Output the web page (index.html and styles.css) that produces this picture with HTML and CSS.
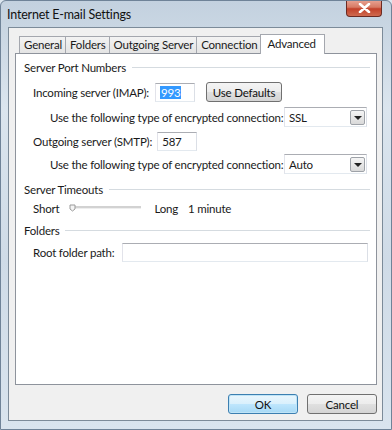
FILE: index.html
```html
<!DOCTYPE html>
<html lang="en">
<head>
<meta charset="UTF-8">
<title>Internet E-mail Settings</title>
<link rel="stylesheet" href="styles.css">
</head>
<body>

<div class="window">
    <div class="titlebar">
        <span class="title">Internet E-mail Settings</span>
        <div class="close-btn">
            <svg width="13" height="10" viewBox="0 0 13 10">
                <path d="M2 1 L11 9 M11 1 L2 9" stroke="#fff" stroke-width="2.6" stroke-linecap="round"/>
            </svg>
        </div>
    </div>

    <div class="client">
        <div class="tabs">
            <div class="tab">General</div>
            <div class="tab">Folders</div>
            <div class="tab">Outgoing Server</div>
            <div class="tab">Connection</div>
            <div class="tab active">Advanced</div>
        </div>

        <div class="panel">
            <div class="group-head"><span>Server Port Numbers</span><div class="rule"></div></div>

            <div class="row row-imap">
                <span class="lbl">Incoming server (IMAP):</span>
                <div class="textbox port"><span class="sel-text">993</span></div>
                <button class="btn defaults">Use Defaults</button>
            </div>
            <div class="row row-enc">
                <span class="lbl">Use the following type of encrypted connection:</span>
                <div class="combo"><span>SSL</span><div class="drop"></div></div>
            </div>
            <div class="row row-smtp">
                <span class="lbl">Outgoing server (SMTP):</span>
                <div class="textbox port"><span>587</span></div>
            </div>
            <div class="row row-enc2">
                <span class="lbl">Use the following type of encrypted connection:</span>
                <div class="combo"><span>Auto</span><div class="drop"></div></div>
            </div>

            <div class="group-head head-timeouts"><span>Server Timeouts</span><div class="rule"></div></div>
            <div class="row row-slider">
                <span class="lbl">Short</span>
                <div class="slider">
                    <div class="track"></div>
                    <svg class="thumb" width="7" height="8" viewBox="0 0 7 8">
                        <path d="M1 1 H6 V5 L3.5 7 L1 5 Z" fill="#f4f4f4" stroke="#9a9a9a" stroke-width="1"/>
                    </svg>
                </div>
                <span class="lbl long">Long</span>
                <span class="lbl">1 minute</span>
            </div>

            <div class="group-head head-folders"><span>Folders</span><div class="rule"></div></div>
            <div class="row row-root">
                <span class="lbl">Root folder path:</span>
                <div class="textbox wide"></div>
            </div>
        </div>

        <div class="actions">
            <button class="btn ok">OK</button>
            <button class="btn cancel">Cancel</button>
        </div>
    </div>
</div>

</body>
</html>
```

FILE: styles.css
```css
body {
    margin: 0;
    padding: 0;
    background: #dce6ef;
    font-family: Lato, "Noto Sans", sans-serif;
    font-size: 11.5px;
    letter-spacing: -0.2px;
    color: #1a1a1a;
    white-space: nowrap;
}
.window {
    width: 392px;
    height: 430px;
    box-sizing: border-box;
    border: 1px solid #6f8398;
    border-radius: 6px 6px 0 0;
    background: linear-gradient(180deg, #c3d1df 0%, #dbe5ee 25%, #cfdbe7 60%, #d9e4ee 100%);
    display: flex;
    flex-direction: column;
    overflow: hidden;
}
.titlebar {
    height: 26px;
    display: flex;
    justify-content: space-between;
    align-items: flex-start;
    padding-left: 6px;
    padding-right: 9px;
}
.title {
    font-size: 12.5px;
    color: #111;
    margin-top: 6px;
}
.close-btn {
    width: 36px;
    height: 17px;
    margin-top: -1px;
    box-sizing: border-box;
    border: 1px solid #6b2a22;
    border-top: none;
    border-radius: 0 0 4px 4px;
    background: linear-gradient(180deg, #e9a595 0%, #d77a64 45%, #c2412a 55%, #cf6a4f 100%);
    display: flex;
    justify-content: center;
    align-items: center;
}
.client {
    margin: 0 8px 8px 7px;
    flex: 1;
    border: 1px solid #7c8b99;
    background: #f0f0f0;
    padding: 6px 5px 0 6px;
    display: flex;
    flex-direction: column;
}

/* Tabs */
.tabs {
    display: flex;
    align-items: flex-end;
    padding-left: 4px;
    height: 19px;
}
.tab {
    height: 17px;
    box-sizing: border-box;
    padding: 0 3px 0 4px;
    border: 1px solid #a4a7ae;
    border-bottom: none;
    margin-right: -1px;
    background: linear-gradient(180deg, #f3f3f3, #e4e4e4);
    line-height: 16px;
}
.tab.active {
    height: 20px;
    margin-bottom: -1px;
    background: #fff;
    position: relative;
    z-index: 1;
    padding: 0 8px 0 6px;
    line-height: 17px;
}
.panel {
    height: 332px;
    box-sizing: border-box;
    border: 1px solid #8e939c;
    background: #fff;
    padding: 6px 6px 0 8px;
}

/* Groups */
.group-head {
    display: flex;
    align-items: center;
    height: 15px;
}
.group-head .rule {
    flex: 1;
    height: 1px;
    background: #d5dbe0;
    margin-left: 6px;
}
.head-timeouts { margin-top: 8px; }
.head-folders { margin-top: 7px; }

.row {
    display: flex;
    align-items: center;
    padding-left: 9px;
}
.row-imap { margin-top: 7px; }
.row-enc { margin-top: 5px; padding-left: 26px; }
.row-smtp { margin-top: 5px; }
.row-enc2 { margin-top: 3px; padding-left: 26px; }
.row-slider { margin-top: 4px; height: 15px; }
.row-root { margin-top: 5px; }

.textbox {
    height: 19px;
    box-sizing: border-box;
    border: 1px solid #abadb3;
    border-color: #abadb3 #dbdfe6 #e3e9ef #e2e3ea;
    background: #fff;
    display: flex;
    align-items: center;
    padding-left: 4px;
}
.port { width: 40px; }
.row-imap .port { margin-left: 6px; }
.row-smtp .port { margin-left: 5px; }
.sel-text {
    background: #3399ff;
    color: #fff;
    padding: 0 1px;
}
.wide {
    width: 246px;
    margin-left: 8px;
}

.btn {
    font-family: inherit;
    font-size: 11.5px;
    letter-spacing: -0.2px;
    color: #111;
    height: 20px;
    box-sizing: border-box;
    border: 1px solid #707070;
    border-radius: 3px;
    background: linear-gradient(180deg, #f4f4f4 0%, #ececec 50%, #e0e0e0 51%, #d4d4d4 100%);
    padding: 0;
}
.defaults {
    width: 76px;
    margin-left: 11px;
}

.combo {
    width: 83px;
    height: 20px;
    box-sizing: border-box;
    border: 1px solid #abadb3;
    border-color: #abadb3 #dbdfe6 #e3e9ef #e2e3ea;
    background: #fff;
    display: flex;
    align-items: center;
    justify-content: space-between;
    padding: 0 1px 0 4px;
    margin-left: auto;
    margin-right: 3px;
}
.drop {
    width: 15px;
    height: 15px;
    box-sizing: border-box;
    border: 1px solid #9ea2a8;
    border-radius: 2px;
    background: linear-gradient(180deg, #f5f5f5, #d9d9d9);
    position: relative;
}
.drop::after {
    content: "";
    position: absolute;
    left: 3px;
    top: 5px;
    border-left: 4px solid transparent;
    border-right: 4px solid transparent;
    border-top: 4px solid #222;
}

/* Slider */
.slider {
    width: 72px;
    height: 12px;
    margin-left: 10px;
    position: relative;
}
.track {
    position: absolute;
    left: 2px;
    right: 0;
    top: 3px;
    height: 2px;
    background: #d2d2d2;
    border-bottom: 1px solid #eee;
}
.thumb {
    position: absolute;
    left: 0;
    top: 1px;
}
.long {
    margin-left: 13px;
    margin-right: 10px;
}

.actions {
    display: flex;
    justify-content: flex-end;
    gap: 9px;
    margin-top: 9px;
    padding-right: 0;
}
.ok, .cancel {
    width: 70px;
}
.ok {
    border-color: #3c7fb1;
    background: linear-gradient(180deg, #eaf6fd 0%, #d9f0fc 50%, #bee6fd 51%, #a7d9f5 100%);
    box-shadow: inset 0 0 0 1px #bfe4f7;
}
```
